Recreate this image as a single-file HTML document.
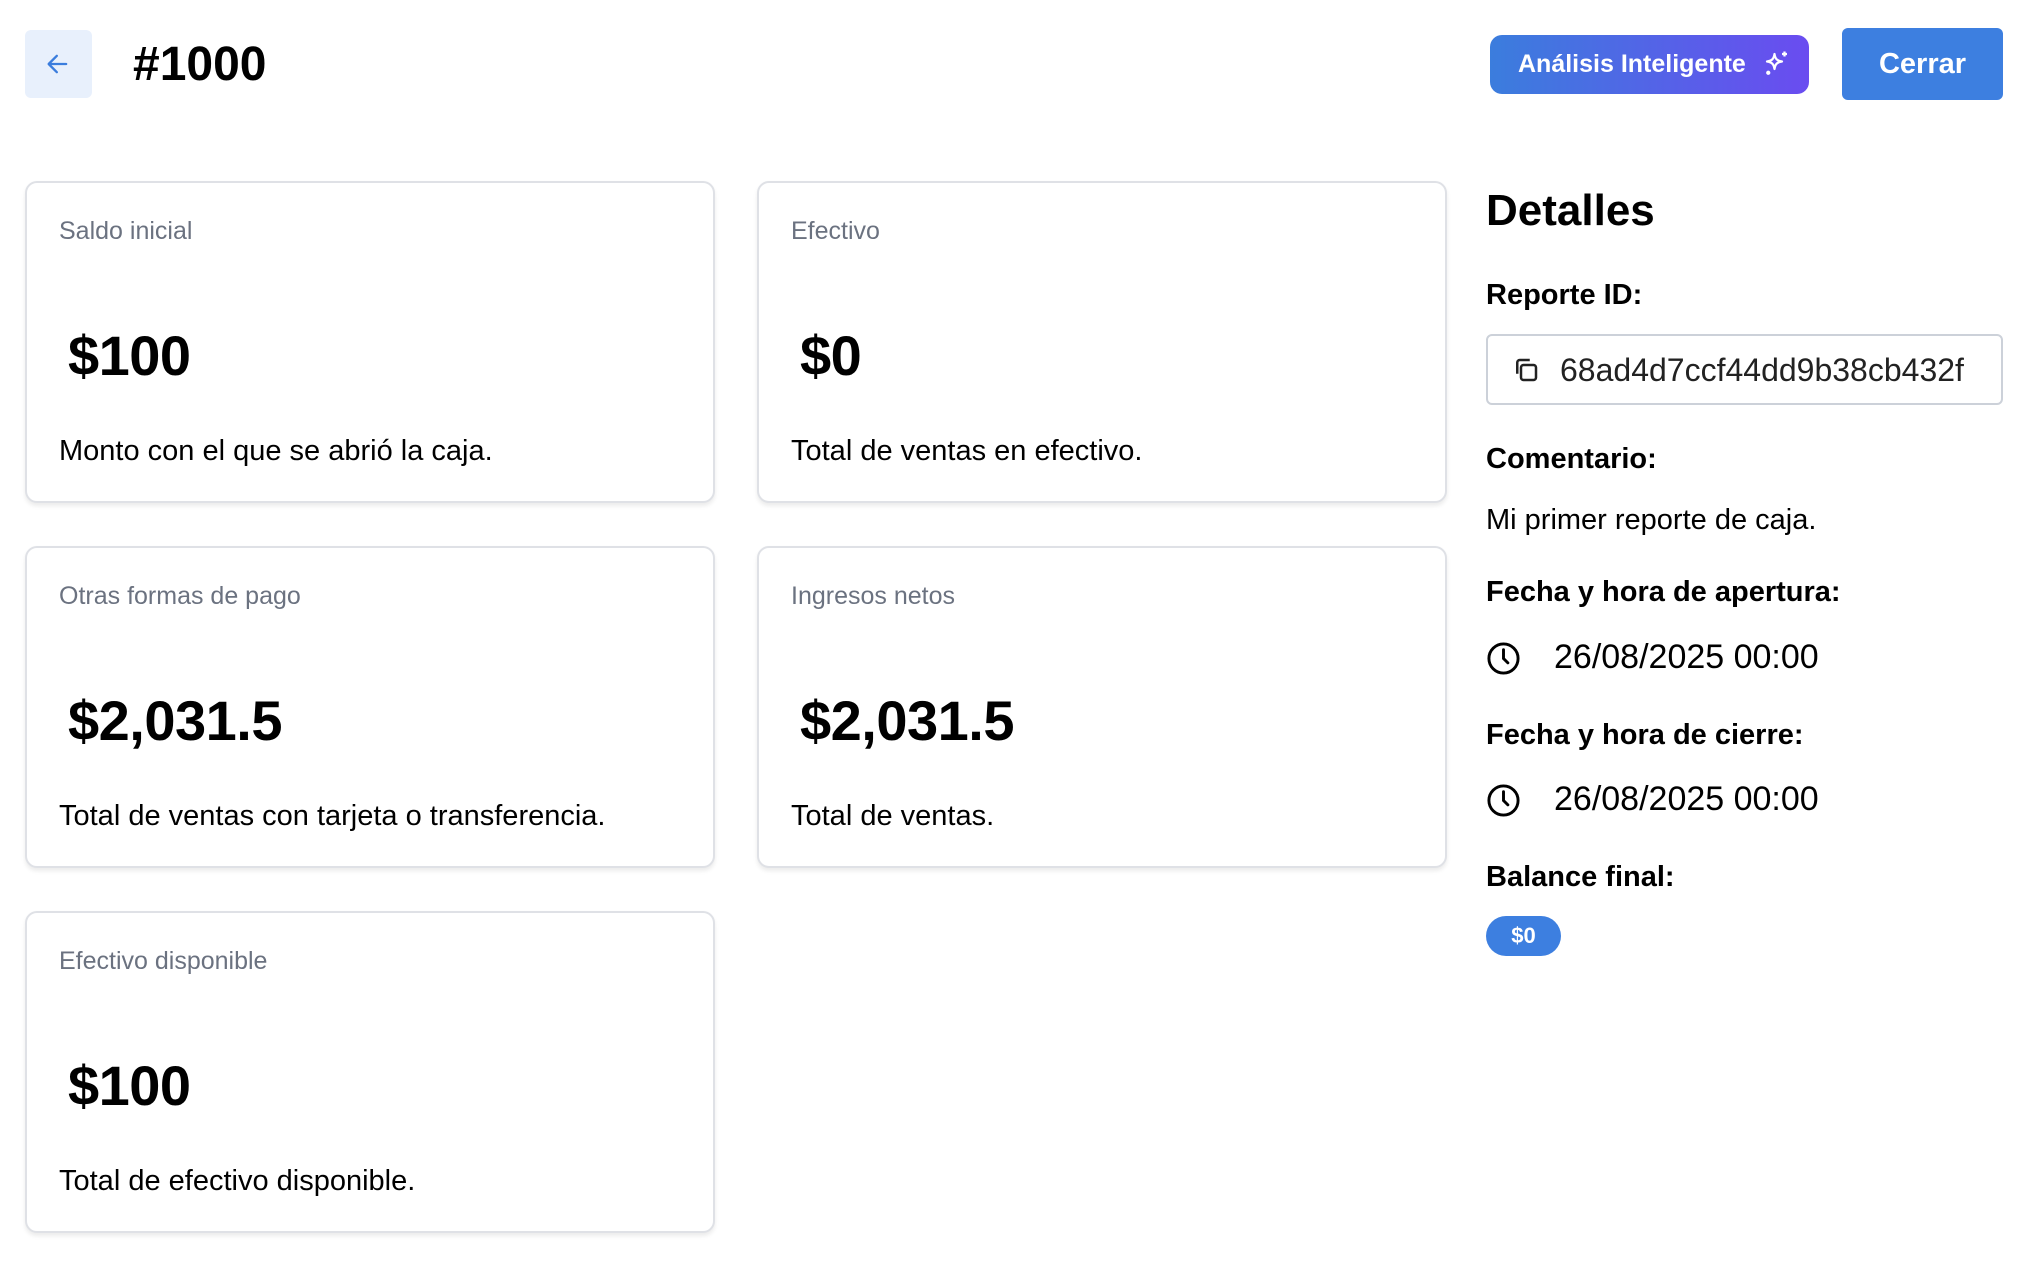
<!DOCTYPE html>
<html><head><meta charset="utf-8"><style>
*{margin:0;padding:0;box-sizing:border-box}
body{width:2028px;height:1266px;background:#fff;font-family:"Liberation Sans",Arial,sans-serif;color:#000;position:relative;overflow:hidden}
.a{position:absolute}
.card{position:absolute;width:690px;height:322px;border:2px solid #dfe1e6;border-radius:12px;box-shadow:0 3px 4px rgba(0,0,0,.08);background:#fff}
.lbl{position:absolute;left:32px;top:34px;font-size:25px;color:#6b7280}
.val{position:absolute;left:41px;top:140px;font-size:56px;font-weight:bold;letter-spacing:-0.5px}
.desc{position:absolute;left:32px;top:252px;font-size:29px}
.h{position:absolute;left:1486px;font-size:29px;font-weight:bold}
.t{position:absolute;font-size:28px}
</style></head><body>
<div class="a" style="left:25px;top:30px;width:67px;height:68px;background:#e8f0fc;border-radius:6px"></div>
<svg class="a" style="left:44px;top:50px" width="28" height="28" viewBox="0 0 24 24" fill="none" stroke="#3b7ddd" stroke-width="2" stroke-linecap="round" stroke-linejoin="round"><path d="M19 12H5M11 5l-7 7 7 7"/></svg>
<div class="a" style="left:133px;top:37px;font-size:48px;font-weight:bold">#1000</div>

<div class="a" style="left:1490px;top:35px;width:319px;height:59px;border-radius:12px;background:linear-gradient(90deg,#3b7ddd,#6a4cf0);color:#fff;font-size:25px;font-weight:bold;line-height:59px;padding-left:28px">Análisis Inteligente</div>
<svg class="a" style="left:1762px;top:49px" width="30" height="30" viewBox="0 0 24 24" fill="none" stroke="#fff" stroke-width="1.8" stroke-linejoin="round"><path d="M10 4c.6 4 2 5.4 6 6-4 .6-5.4 2-6 6-.6-4-2-5.4-6-6 4-.6 5.4-2 6-6z"/><path d="M18 2v4M16 4h4"/><circle cx="5" cy="19" r=".8" fill="#fff"/></svg>
<div class="a" style="left:1842px;top:28px;width:161px;height:72px;border-radius:6px;background:#3d7fe0;color:#fff;font-size:29px;font-weight:bold;text-align:center;line-height:72px">Cerrar</div>

<div class="card" style="left:25px;top:181px"><div class="lbl">Saldo inicial</div><div class="val">$100</div><div class="desc">Monto con el que se abrió la caja.</div></div>
<div class="card" style="left:757px;top:181px"><div class="lbl">Efectivo</div><div class="val">$0</div><div class="desc">Total de ventas en efectivo.</div></div>
<div class="card" style="left:25px;top:546px"><div class="lbl">Otras formas de pago</div><div class="val">$2,031.5</div><div class="desc">Total de ventas con tarjeta o transferencia.</div></div>
<div class="card" style="left:757px;top:546px"><div class="lbl">Ingresos netos</div><div class="val">$2,031.5</div><div class="desc">Total de ventas.</div></div>
<div class="card" style="left:25px;top:911px"><div class="lbl">Efectivo disponible</div><div class="val">$100</div><div class="desc">Total de efectivo disponible.</div></div>

<div class="a" style="left:1486px;top:186px;font-size:44px;font-weight:bold">Detalles</div>
<div class="h" style="top:279px">Reporte ID:</div>
<div class="a" style="left:1486px;top:334px;width:517px;height:71px;border:2px solid #ccd1d9;border-radius:6px"></div>
<svg class="a" style="left:1511px;top:355px" width="30" height="30" viewBox="0 0 24 24" fill="none" stroke="#222" stroke-width="2" stroke-linejoin="round"><rect x="8" y="8" width="12" height="12" rx="2"/><path d="M5 15V6a2 2 0 0 1 2-2h8"/></svg>
<div class="t" style="left:1560px;top:352px;font-size:32px;color:#222">68ad4d7ccf44dd9b38cb432f</div>
<div class="h" style="top:443px">Comentario:</div>
<div class="t" style="left:1486px;top:504px;font-size:29px">Mi primer reporte de caja.</div>
<div class="h" style="top:576px">Fecha y hora de apertura:</div>
<svg class="a" style="left:1486px;top:641px" width="35" height="35" viewBox="0 0 24 24" fill="none" stroke="#000" stroke-width="2" stroke-linecap="round"><circle cx="12" cy="12" r="10"/><path d="M12 6v6l3 3"/></svg>
<div class="t" style="left:1554px;top:638px;font-size:34px">26/08/2025 00:00</div>
<div class="h" style="top:719px">Fecha y hora de cierre:</div>
<svg class="a" style="left:1486px;top:783px" width="35" height="35" viewBox="0 0 24 24" fill="none" stroke="#000" stroke-width="2" stroke-linecap="round"><circle cx="12" cy="12" r="10"/><path d="M12 6v6l3 3"/></svg>
<div class="t" style="left:1554px;top:780px;font-size:34px">26/08/2025 00:00</div>
<div class="h" style="top:861px">Balance final:</div>
<div class="a" style="left:1486px;top:916px;width:75px;height:40px;border-radius:20px;background:#3d7fe0;color:#fff;font-weight:bold;font-size:22px;text-align:center;line-height:40px">$0</div>
</body></html>
